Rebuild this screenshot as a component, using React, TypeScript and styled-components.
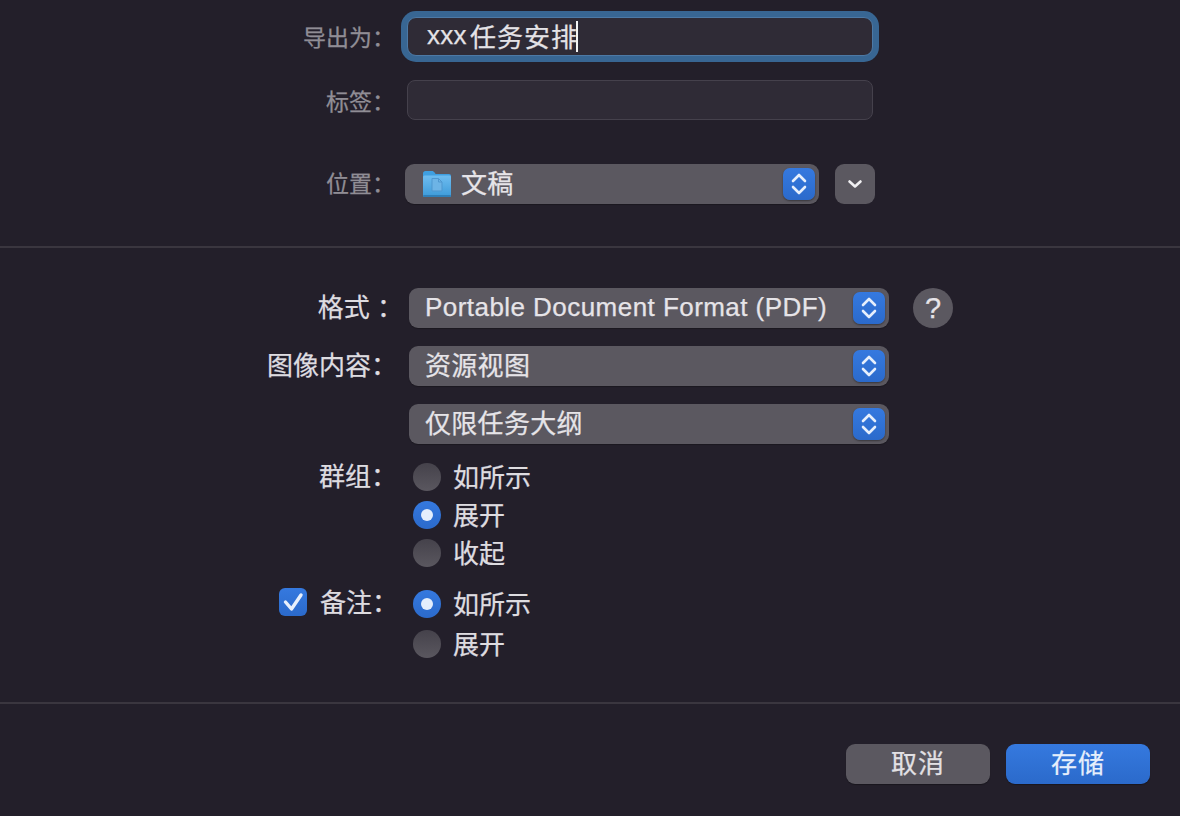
import React from "react";
import styled, { createGlobalStyle } from "styled-components";

const GlobalStyle = createGlobalStyle`
  html, body {
    margin: 0;
    padding: 0;
    background: #231f2a;
  }
  body {
    font-family: "Liberation Sans", "Noto Sans CJK SC", sans-serif;
    -webkit-text-stroke: 0.25px currentColor;
  }
`;

const Page = styled.div`
  width: 1180px;
  height: 816px;
  overflow: hidden;
  background: #231f2a;
  color: #dedce0;
`;

const Section = styled.section<{ $height: number; $top: number }>`
  box-sizing: border-box;
  height: ${(p) => p.$height}px;
  padding-top: ${(p) => p.$top}px;
`;

const Divider = styled.div`
  height: 2px;
  background: #3a363f;
`;

const Row = styled.div<{ $mt?: number; $h?: number }>`
  display: flex;
  align-items: center;
  height: ${(p) => p.$h ?? 40}px;
  margin-top: ${(p) => p.$mt ?? 0}px;
`;

const Label = styled.div<{ $w?: number; $pt?: number }>`
  flex: none;
  width: ${(p) => p.$w ?? 397}px;
  padding-top: ${(p) => p.$pt ?? 0}px;
  text-align: right;
  white-space: nowrap;
  font-size: 26px;
  line-height: 30px;
  color: #dedce0;
`;

const DimLabel = styled.div<{ $pt?: number }>`
  flex: none;
  width: 395px;
  padding-top: ${(p) => p.$pt ?? 0}px;
  text-align: right;
  white-space: nowrap;
  font-size: 23px;
  line-height: 30px;
  color: #908d95;
`;

const NameField = styled.div`
  box-sizing: border-box;
  display: flex;
  align-items: center;
  margin-left: 12px;
  width: 466px;
  height: 39px;
  padding-left: 19px;
  border: 1px solid #4d79a5;
  border-radius: 9px;
  background: #2f2b36;
  box-shadow: 0 0 0 6px #386693;
  font-size: 26px;
  color: #e4e2e6;
`;

const NameLatin = styled.span`
  padding-bottom: 2px;
  margin-right: 3px;
  letter-spacing: 0.3px;
`;

const NameCjk = styled.span`
  padding-bottom: 2px;
  letter-spacing: 1px;
  margin-right: -2px;
`;

const Caret = styled.span`
  display: inline-block;
  width: 2px;
  height: 31px;
  background: #f4f4f4;
`;

const TagField = styled.div`
  box-sizing: border-box;
  margin-left: 12px;
  width: 466px;
  height: 40px;
  border: 1px solid #45414c;
  border-radius: 8px;
  background: #2f2b36;
`;

const Popup = styled.div<{ $w: number; $ml: number }>`
  box-sizing: border-box;
  display: flex;
  align-items: center;
  width: ${(p) => p.$w}px;
  height: 40px;
  margin-left: ${(p) => p.$ml}px;
  padding: 0 4px 0 16px;
  border-radius: 9px;
  background: #5b5860;
  box-shadow: 0 1px 1px rgba(0, 0, 0, 0.25);
  font-size: 26px;
  color: #e6e4e8;
  white-space: nowrap;
`;

const PopupText = styled.span<{ $latin?: boolean }>`
  flex: 1;
  padding-bottom: ${(p) => (p.$latin ? 2 : 5)}px;
  letter-spacing: ${(p) => (p.$latin ? 0.45 : 0.3)}px;
`;

const Stepper = styled.span`
  flex: none;
  display: flex;
  align-items: center;
  justify-content: center;
  width: 32px;
  height: 32px;
  border-radius: 7px;
  background: linear-gradient(#3579df, #2b6acb);
  box-shadow: 0 1px 2px rgba(0, 0, 0, 0.4);
`;

const SquareButton = styled.div`
  display: flex;
  align-items: center;
  justify-content: center;
  width: 40px;
  height: 40px;
  margin-left: 16px;
  border-radius: 9px;
  background: #5b5860;
`;

const HelpButton = styled.div`
  display: flex;
  align-items: center;
  justify-content: center;
  width: 40px;
  height: 40px;
  margin-left: 24px;
  border-radius: 50%;
  background: #5b5860;
  font-size: 29px;
  color: #e6e4e8;
`;

const RadioCell = styled.div`
  display: flex;
  align-items: center;
  margin-left: 16px;
  font-size: 26px;
  color: #dedce0;
`;

const RadioText = styled.span`
  padding-bottom: 4px;
`;

const RadioDot = styled.span<{ $on?: boolean }>`
  flex: none;
  display: flex;
  align-items: center;
  justify-content: center;
  width: 28px;
  height: 28px;
  margin-right: 12px;
  border-radius: 50%;
  background: ${(p) =>
    p.$on
      ? "linear-gradient(#3579df, #2b6acb)"
      : "linear-gradient(#45424b, #5a575f)"};
  &::after {
    content: "";
    display: ${(p) => (p.$on ? "block" : "none")};
    width: 12px;
    height: 12px;
    border-radius: 50%;
    background: #e4eefc;
  }
`;

const CheckLabel = styled.div`
  flex: none;
  width: 397px;
  display: flex;
  justify-content: flex-end;
  align-items: center;
  gap: 13px;
  margin-top: -4px;
`;

const CheckBox = styled.span`
  display: flex;
  width: 28px;
  height: 28px;
  border-radius: 6px;
  background: linear-gradient(#3579df, #2b6acb);
`;

const Footer = styled.footer`
  display: flex;
  justify-content: flex-end;
  gap: 16px;
  padding: 40px 30px 0 0;
`;

const Button = styled.div<{ $primary?: boolean }>`
  box-sizing: border-box;
  display: flex;
  align-items: center;
  justify-content: center;
  width: 144px;
  height: 40px;
  padding-bottom: 5px;
  border-radius: 9px;
  background: ${(p) =>
    p.$primary ? "linear-gradient(#3579df, #2b6acb)" : "#5b5860"};
  box-shadow: 0 1px 1px rgba(0, 0, 0, 0.3);
  font-size: 26px;
  letter-spacing: 1px;
  color: ${(p) => (p.$primary ? "#e6effc" : "#e2e0e4")};
`;

const StepperIcon: React.FC = () => (
  <svg width="22" height="26" viewBox="0 0 22 26" fill="none">
    <path
      d="M5 10 11 4l6 6M5 16l6 6 6-6"
      stroke="#e6effc"
      strokeWidth="2.6"
      strokeLinecap="round"
      strokeLinejoin="round"
    />
  </svg>
);

const FolderIcon: React.FC = () => (
  <svg
    width="30"
    height="28"
    viewBox="0 0 30 28"
    style={{ marginRight: 9, marginLeft: 1 }}
  >
    <defs>
      <linearGradient id="folderFront" x1="0" y1="0" x2="0" y2="1">
        <stop offset="0" stopColor="#6fbdf0" />
        <stop offset="1" stopColor="#3d9ad8" />
      </linearGradient>
    </defs>
    <path
      d="M1 3.5C1 2 2 1 3.5 1h6.5c1.2 0 1.8.6 2.6 1.6L13.6 4H27c1.2 0 2 .8 2 2v4H1Z"
      fill="#3f9fe0"
    />
    <rect x="1" y="5.5" width="28" height="21.5" rx="1.5" fill="url(#folderFront)" />
    <rect x="1" y="25" width="28" height="2" rx="1" fill="#2f7fb8" />
    <path
      d="M10 8.5h6.5l3.5 3.5V21H10Z"
      fill="#6db4e6"
      stroke="#4f97cf"
      strokeWidth="1"
    />
    <path d="M16.5 8.5V12H20" fill="none" stroke="#4f97cf" strokeWidth="1" />
  </svg>
);

const ChevronIcon: React.FC = () => (
  <svg width="16" height="12" viewBox="0 0 16 12" fill="none">
    <path
      d="M2.5 3.5 8 8.5l5.5-5"
      stroke="#f0eff2"
      strokeWidth="2.6"
      strokeLinecap="round"
      strokeLinejoin="round"
    />
  </svg>
);

const CheckIcon: React.FC = () => (
  <svg width="28" height="28" viewBox="0 0 28 28" fill="none">
    <path
      d="M6.5 14 12.5 21 22 7"
      stroke="#e8f0fc"
      strokeWidth="3.4"
      strokeLinecap="round"
      strokeLinejoin="round"
    />
  </svg>
);

function App() {
  return (
    <Page>
      <GlobalStyle />
      <Section $height={246} $top={17}>
        <Row $h={39}>
          <DimLabel $pt={2}>导出为：</DimLabel>
          <NameField>
            <NameLatin>xxx</NameLatin>
            <NameCjk>任务安排</NameCjk>
            <Caret />
          </NameField>
        </Row>
        <Row $mt={24}>
          <DimLabel $pt={4}>标签：</DimLabel>
          <TagField />
        </Row>
        <Row $mt={44}>
          <DimLabel>位置：</DimLabel>
          <Popup $w={414} $ml={10}>
            <FolderIcon />
            <PopupText>文稿</PopupText>
            <Stepper>
              <StepperIcon />
            </Stepper>
          </Popup>
          <SquareButton>
            <ChevronIcon />
          </SquareButton>
        </Row>
      </Section>
      <Divider />
      <Section $height={454} $top={40}>
        <Row>
          <Label $w={403}>格式 ：</Label>
          <Popup $w={480} $ml={6}>
            <PopupText $latin>Portable Document Format (PDF)</PopupText>
            <Stepper>
              <StepperIcon />
            </Stepper>
          </Popup>
          <HelpButton>?</HelpButton>
        </Row>
        <Row $mt={18}>
          <Label>图像内容：</Label>
          <Popup $w={480} $ml={12}>
            <PopupText>资源视图</PopupText>
            <Stepper>
              <StepperIcon />
            </Stepper>
          </Popup>
        </Row>
        <Row $mt={18}>
          <Label />
          <Popup $w={480} $ml={12}>
            <PopupText>仅限任务大纲</PopupText>
            <Stepper>
              <StepperIcon />
            </Stepper>
          </Popup>
        </Row>
        <Row $mt={19} $h={28}>
          <Label>群组：</Label>
          <RadioCell>
            <RadioDot />
            <RadioText>如所示</RadioText>
          </RadioCell>
        </Row>
        <Row $mt={10} $h={28}>
          <Label />
          <RadioCell>
            <RadioDot $on />
            <RadioText>展开</RadioText>
          </RadioCell>
        </Row>
        <Row $mt={10} $h={28}>
          <Label />
          <RadioCell>
            <RadioDot />
            <RadioText>收起</RadioText>
          </RadioCell>
        </Row>
        <Row $mt={23} $h={28}>
          <CheckLabel>
            <CheckBox>
              <CheckIcon />
            </CheckBox>
            <Label $w={77} $pt={2}>
              备注：
            </Label>
          </CheckLabel>
          <RadioCell>
            <RadioDot $on />
            <RadioText>如所示</RadioText>
          </RadioCell>
        </Row>
        <Row $mt={12} $h={28}>
          <Label />
          <RadioCell>
            <RadioDot />
            <RadioText>展开</RadioText>
          </RadioCell>
        </Row>
      </Section>
      <Divider />
      <Footer>
        <Button>取消</Button>
        <Button $primary>存储</Button>
      </Footer>
    </Page>
  );
}

export default App;
